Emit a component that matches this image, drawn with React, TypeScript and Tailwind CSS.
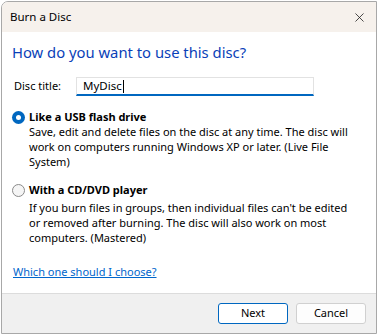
import { X } from 'lucide-react';

const font = { fontFamily: '"Noto Sans", "Open Sans", sans-serif' };

function Radio({ checked }: { checked: boolean }) {
  return checked ? (
    <span className="mt-px flex h-[13px] w-[13px] shrink-0 items-center justify-center rounded-full bg-[#0067c0]">
      <span className="h-[5px] w-[5px] rounded-full bg-white" />
    </span>
  ) : (
    <span className="mt-px h-[13px] w-[13px] shrink-0 rounded-full border border-[#8a8a8a] bg-[#f5f5f5]" />
  );
}

export default function App() {
  return (
    <div className="h-[336px] w-[378px] bg-white" style={font}>
      <div className="ml-px mt-px flex h-[333px] w-[376px] flex-col overflow-hidden rounded-tl-[7px] border border-[#a8a8a8] bg-white">
        {/* Title bar */}
        <div className="flex h-[30px] shrink-0 items-center justify-between bg-[#f6f1ec] pl-[8px] pr-[9px]">
          <span className="text-[11.5px] text-black">Burn a Disc</span>
          <X className="h-[15px] w-[15px] text-[#222]" strokeWidth={1.3} />
        </div>

        {/* Content */}
        <div className="flex flex-1 flex-col px-[10px] pt-[9px]">
          <h1 className="text-[14.8px] leading-[22px] text-[#0a3fb8]">How do you want to use this disc?</h1>

          <div className="mt-[14px] flex items-center">
            <span className="w-[64px] pl-[2px] text-[11px] text-black">Disc title:</span>
            <div className="flex h-[19px] w-[238px] items-center border border-b-2 border-[#e2e2e2] border-b-[#0067c0] bg-white pl-[6px]">
              <span className="text-[11.5px] leading-none text-black">MyDisc</span>
              <span className="ml-px h-[13px] w-px bg-black" />
            </div>
          </div>

          <div className="mt-[14px] flex gap-[4px]">
            <Radio checked />
            <div className="text-[11px] text-black">
              <div className="font-bold leading-[14px]">Like a USB flash drive</div>
              <div className="leading-[15px]">
                Save, edit and delete files on the disc at any time. The disc will
                <br />
                work on computers running Windows XP or later. (Live File
                <br />
                System)
              </div>
            </div>
          </div>

          <div className="mt-[14px] flex gap-[4px]">
            <Radio checked={false} />
            <div className="text-[11px] text-black">
              <div className="font-bold leading-[14px]">With a CD/DVD player</div>
              <div className="mt-[3px] leading-[15px]">
                If you burn files in groups, then individual files can&apos;t be edited
                <br />
                or removed after burning. The disc will also work on most
                <br />
                computers. (Mastered)
              </div>
            </div>
          </div>

          <a href="#" className="mt-[19px] self-start pl-px text-[11px] leading-[15px] text-[#0066cc] underline">
            Which one should I choose?
          </a>
        </div>

        {/* Footer */}
        <div className="flex h-[40px] shrink-0 items-center justify-end gap-[8px] border-t border-[#dcdcdc] bg-[#f0f0f0] pr-[10px]">
          <button className="h-[21px] w-[70px] rounded-[3px] border border-[#0067c0] bg-white text-[11px] text-black">
            Next
          </button>
          <button className="h-[21px] w-[70px] rounded-[3px] border border-[#d0d0d0] bg-[#fdfdfd] text-[11px] text-black">
            Cancel
          </button>
        </div>
      </div>
    </div>
  );
}
